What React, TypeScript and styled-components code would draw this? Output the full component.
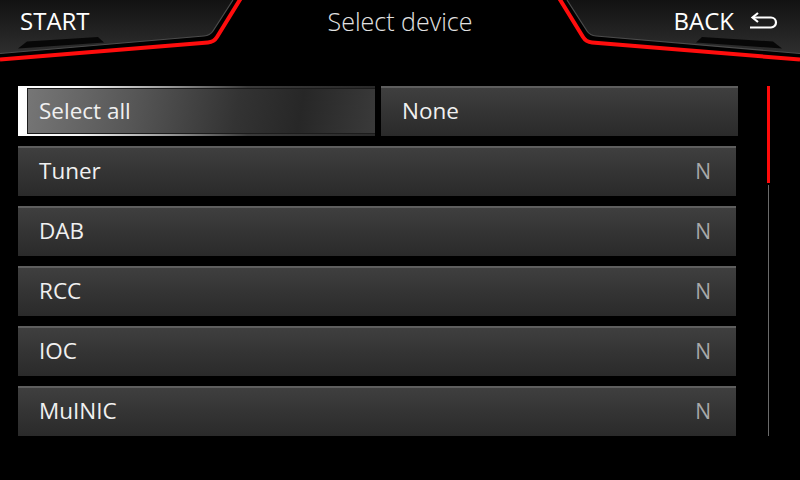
import React, { FunctionComponent } from 'react';
import styled, { createGlobalStyle } from 'styled-components';

const GlobalStyle = createGlobalStyle`
  html, body {
    margin: 0;
    padding: 0;
    background: #000;
  }
  body {
    font-family: 'Open Sans', 'Noto Sans', sans-serif;
  }
`;

const Screen = styled.div`
  width: 800px;
  height: 480px;
  background: #000;
  display: flex;
  flex-direction: column;
  overflow: hidden;
  color: #f2f2f2;
`;

const Header = styled.header`
  height: 64px;
  display: grid;
  grid-template-columns: 250px 1fr 250px;
`;

const HeaderButton = styled.div<{ $side: 'left' | 'right' }>`
  position: relative;
  height: 64px;
  display: flex;
  align-items: flex-start;
  justify-content: ${(p) => (p.$side === 'left' ? 'flex-start' : 'flex-end')};
  padding: ${(p) => (p.$side === 'left' ? '5px 0 0 20px' : '5px 22px 0 0')};
  box-sizing: border-box;
  font-size: 24px;
  color: #fff;
  gap: 15px;

  svg.shape {
    position: absolute;
    inset: 0;
    z-index: 0;
    transform: ${(p) => (p.$side === 'right' ? 'scaleX(-1)' : 'none')};
  }
`;

const HeaderLabel = styled.span`
  position: relative;
  z-index: 1;
  line-height: 32px;
`;

const BackIcon = styled.svg`
  position: relative;
  z-index: 1;
  margin-top: 7px;
`;

const Title = styled.h1`
  margin: 0;
  padding-top: 5px;
  text-align: center;
  font-size: 25px;
  line-height: 32px;
  font-weight: 300;
  color: #e2e2e2;
`;

const Body = styled.main`
  flex: 1;
  display: flex;
  padding: 22px 0 0 18px;
  gap: 29px;
`;

const List = styled.div`
  width: 720px;
  display: flex;
  flex-direction: column;
  gap: 10px;
`;

const ChoiceRow = styled.div`
  display: grid;
  grid-template-columns: 357px 357px;
  gap: 6px;
  height: 50px;
`;

const SelectedChoice = styled.div`
  padding: 2px 0 2px 9px;
  background: linear-gradient(to right, #ffffff 0px, #f4f4f4 60px, #9a9a9a 150px, #3a3a3a 230px, #2a2a2a 357px);
  display: flex;
`;

const SelectedInner = styled.div`
  flex: 1;
  border: 1px solid #1c1c1c;
  border-right: none;
  background: linear-gradient(100deg, #767676 0%, #575757 30%, #333 60%, #272727 78%, #3a3a3a 100%);
  display: flex;
  align-items: center;
  padding: 0 0 2px 11px;
  font-size: 22.5px;
  color: #f0f0f0;
`;

const Item = styled.div<{ $width?: number }>`
  height: 50px;
  width: ${(p) => (p.$width ? `${p.$width}px` : '100%')};
  box-sizing: border-box;
  border-top: 2px solid #5e5e5e;
  background: linear-gradient(to bottom, #3f3f3f 0%, #333 55%, #2a2a2a 100%);
  display: flex;
  align-items: center;
  justify-content: space-between;
  padding: 0 25px 3px 21px;
  font-size: 22.5px;
  color: #f0f0f0;
`;

const ItemValue = styled.span`
  color: #a8a8a8;
  font-size: 21px;
`;

const Scrollbar = styled.div`
  width: 3px;
  height: 350px;
  display: flex;
  flex-direction: column;
  align-items: center;
  gap: 2px;
`;

const ScrollThumb = styled.div`
  width: 3px;
  height: 97px;
  background: #ff0a0a;
`;

const ScrollTrack = styled.div`
  width: 1px;
  flex: 1;
  background: #6a6a6a;
`;

const HeaderShape: FunctionComponent = () => (
  <svg className='shape' width='250' height='64' viewBox='0 0 250 64'>
    <defs>
      <linearGradient id='hdrFill' x1='0' y1='0' x2='0' y2='1'>
        <stop offset='0' stopColor='#121212' />
        <stop offset='1' stopColor='#2e2e2e' />
      </linearGradient>
    </defs>
    <path d='M0,0 H233 L213,31 Q210,35.5 204,36 L0,53.5 Z' fill='url(#hdrFill)' />
    <path d='M233,0 L213,31 Q210,35.5 204,36 L0,53.5' fill='none' stroke='#4c4c4c' strokeWidth='1.2' />
    <path d='M18,48.5 L27,41.5 L98,37 L104,42.5 Z' fill='#070707' />
    <path d='M241,-2 L217,37 Q214,42 208,42.5 L0,59.5' fill='none' stroke='#ff0d0d' strokeWidth='4' />
  </svg>
);

const devices = ['Tuner', 'DAB', 'RCC', 'IOC', 'MuINIC'];

const App: FunctionComponent = (): JSX.Element => {
  return (
    <>
      <GlobalStyle />
      <Screen>
        <Header>
          <HeaderButton $side='left'>
            <HeaderShape />
            <HeaderLabel>START</HeaderLabel>
          </HeaderButton>
          <Title>Select device</Title>
          <HeaderButton $side='right'>
            <HeaderShape />
            <HeaderLabel>BACK</HeaderLabel>
            <BackIcon width='29' height='18' viewBox='0 0 29 18'>
              <path
                d='M1,15.5 H22 A5,5 0 0 0 22,5.5 H4'
                fill='none'
                stroke='#fff'
                strokeWidth='2.2'
              />
              <path d='M9,1 L3.5,5.5 L9,10' fill='none' stroke='#fff' strokeWidth='2.2' />
            </BackIcon>
          </HeaderButton>
        </Header>
        <Body>
          <List>
            <ChoiceRow>
              <SelectedChoice>
                <SelectedInner>Select all</SelectedInner>
              </SelectedChoice>
              <Item>None</Item>
            </ChoiceRow>
            {devices.map((name) => (
              <Item key={name} $width={718}>
                <span>{name}</span>
                <ItemValue>N</ItemValue>
              </Item>
            ))}
          </List>
          <Scrollbar>
            <ScrollThumb />
            <ScrollTrack />
          </Scrollbar>
        </Body>
      </Screen>
    </>
  );
};

export default App;
